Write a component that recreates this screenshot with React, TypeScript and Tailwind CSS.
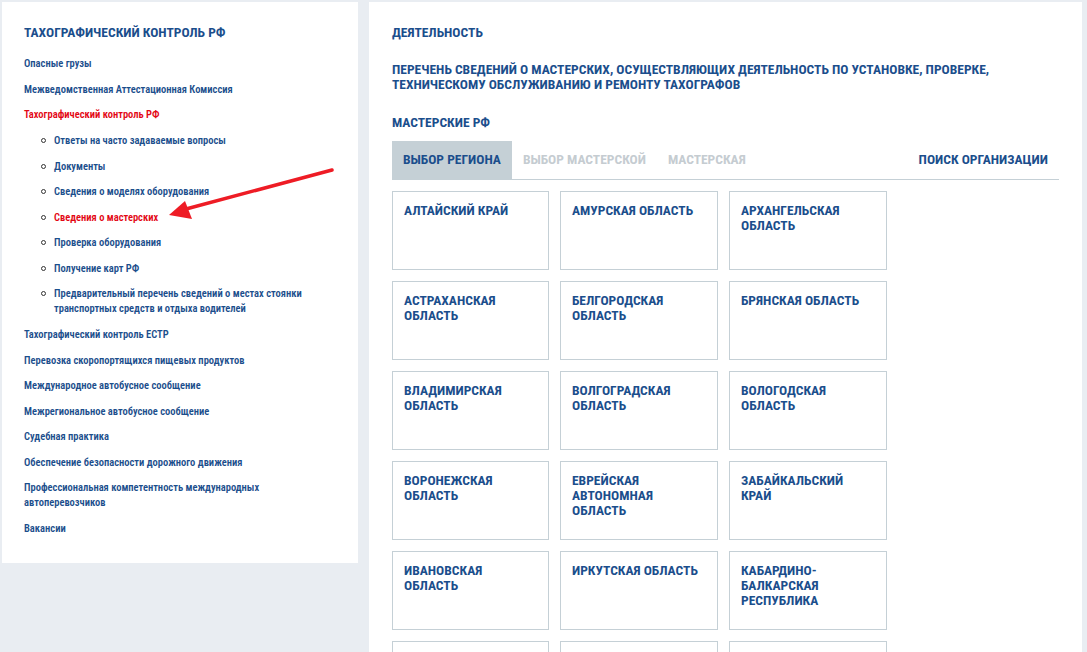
import React from "react";

const F = { fontFamily: '"Roboto Condensed", "Liberation Sans Narrow", "DejaVu Sans Condensed", sans-serif' };

const topItems1 = ["Опасные грузы", "Межведомственная Аттестационная Комиссия"];
const subItems = [
  "Ответы на часто задаваемые вопросы",
  "Документы",
  "Сведения о моделях оборудования",
  "Сведения о мастерских",
  "Проверка оборудования",
  "Получение карт РФ",
  "Предварительный перечень сведений о местах стоянки транспортных средств и отдыха водителей",
];
const topItems2 = [
  "Тахографический контроль ЕСТР",
  "Перевозка скоропортящихся пищевых продуктов",
  "Международное автобусное сообщение",
  "Межрегиональное автобусное сообщение",
  "Судебная практика",
  "Обеспечение безопасности дорожного движения",
  "Профессиональная компетентность международных автоперевозчиков",
  "Вакансии",
];

const regions = [
  "АЛТАЙСКИЙ КРАЙ",
  "АМУРСКАЯ ОБЛАСТЬ",
  "АРХАНГЕЛЬСКАЯ ОБЛАСТЬ",
  "АСТРАХАНСКАЯ ОБЛАСТЬ",
  "БЕЛГОРОДСКАЯ ОБЛАСТЬ",
  "БРЯНСКАЯ ОБЛАСТЬ",
  "ВЛАДИМИРСКАЯ ОБЛАСТЬ",
  "ВОЛГОГРАДСКАЯ ОБЛАСТЬ",
  "ВОЛОГОДСКАЯ ОБЛАСТЬ",
  "ВОРОНЕЖСКАЯ ОБЛАСТЬ",
  "ЕВРЕЙСКАЯ АВТОНОМНАЯ ОБЛАСТЬ",
  "ЗАБАЙКАЛЬСКИЙ КРАЙ",
  "ИВАНОВСКАЯ ОБЛАСТЬ",
  "ИРКУТСКАЯ ОБЛАСТЬ",
  "КАБАРДИНО-БАЛКАРСКАЯ РЕСПУБЛИКА",
  "",
  "",
  "",
];

export default function App() {
  return (
    <div className="relative flex gap-[11px] bg-[#e9edf2] pt-[2px] pl-[2px] pr-[5px] h-[652px] overflow-hidden" style={F}>
      <aside className="w-[356px] h-[561px] shrink-0 bg-white pl-[22px] pr-[20px] pt-[22px]">
        <h2 className="text-[13.5px] font-bold text-[#1b4e8c] leading-[16px] mb-[16px]">ТАХОГРАФИЧЕСКИЙ КОНТРОЛЬ РФ</h2>
        <ul className="flex flex-col gap-[10.55px] text-[10.5px] font-semibold leading-[15px] text-[#1b4e8c]">
          {topItems1.map((t) => (
            <li key={t}>{t}</li>
          ))}
          <li className="text-[#e30613]">Тахографический контроль РФ</li>
          <li>
            <ul className="flex flex-col gap-[10.55px] pl-[30px] pt-[0.5px]">
              {subItems.map((t) => (
                <li key={t} className={"relative " + (t === "Сведения о мастерских" ? "text-[#e30613]" : "")}>
                  <span className="absolute left-[-13px] top-[5px] w-[5px] h-[5px] rounded-full border border-[#333]" />
                  {t}
                </li>
              ))}
            </ul>
          </li>
          {topItems2.map((t) => (
            <li key={t}>{t}</li>
          ))}
        </ul>
      </aside>
      <main className="flex-1 bg-white pl-[23px] pr-[23px] pt-[22px]">
        <h2 className="text-[13.5px] font-bold text-[#1b4e8c] leading-[16px]">ДЕЯТЕЛЬНОСТЬ</h2>
        <h1 className="mt-[22px] text-[13.5px] font-bold text-[#1b4e8c] leading-[15px] w-[620px]">
          ПЕРЕЧЕНЬ СВЕДЕНИЙ О МАСТЕРСКИХ, ОСУЩЕСТВЛЯЮЩИХ ДЕЯТЕЛЬНОСТЬ ПО УСТАНОВКЕ, ПРОВЕРКЕ, ТЕХНИЧЕСКОМУ ОБСЛУЖИВАНИЮ И РЕМОНТУ ТАХОГРАФОВ
        </h1>
        <h3 className="mt-[22px] text-[13.5px] font-bold text-[#1b4e8c] leading-[16px]">МАСТЕРСКИЕ РФ</h3>
        <div className="mt-[11px] flex items-stretch h-[39px] border-b border-[#c5d0d6] text-[13.5px] font-bold leading-[16px]">
          <div className="bg-[#c5d0d6] px-[11px] pb-[2px] flex items-center text-[#1b4e8c]">ВЫБОР РЕГИОНА</div>
          <div className="px-[11px] pb-[2px] flex items-center text-[#c5ccd1]">ВЫБОР МАСТЕРСКОЙ</div>
          <div className="px-[11px] pb-[2px] flex items-center text-[#c5ccd1]">МАСТЕРСКАЯ</div>
          <div className="ml-auto px-[11px] pb-[2px] flex items-center text-[#1b4e8c]">ПОИСК ОРГАНИЗАЦИИ</div>
        </div>
        <div className="mt-[11px] grid grid-cols-[157px_158px_158px] gap-[11px]">
          {regions.map((r, i) => (
            <div key={i} className="h-[79px] border border-[#c5d0d6] pl-[11px] pr-[18px] pt-[11px] text-[13.5px] font-bold leading-[15px] text-[#1b4e8c]">
              {r}
            </div>
          ))}
        </div>
      </main>
      <svg className="absolute left-0 top-0 pointer-events-none" width="1087" height="652">
        <line x1="332" y1="170" x2="186" y2="209" stroke="#ee1c25" strokeWidth="3.5" strokeLinecap="round" />
        <polygon points="169,215 185,201 192,219" fill="#ee1c25" />
      </svg>
    </div>
  );
}
